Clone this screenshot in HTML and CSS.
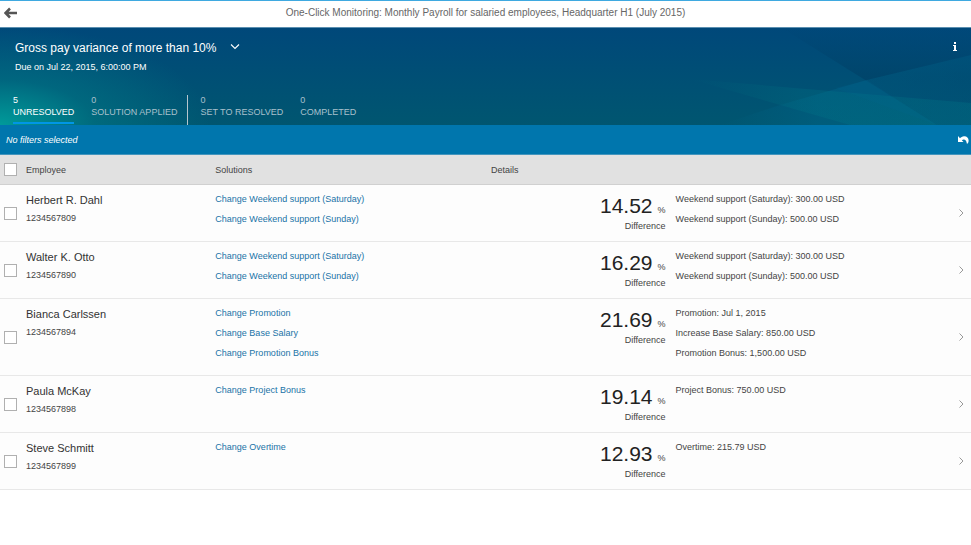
FILE: index.html
```html
<!DOCTYPE html>
<html lang="en">
<head>
  <meta charset="UTF-8" />
  <meta name="viewport" content="width=device-width, initial-scale=1.0" />
  <title>One-Click Monitoring</title>
  <link rel="stylesheet" href="styles.css">
</head>
<body>
  <header class="topbar">
    <button class="icon-btn back" aria-label="Back">
      <svg width="14" height="12" viewBox="0 0 14 12">
        <path d="M6 1.5 1.500 6l4.500 4.500M2 6H13" fill="none" stroke="#555" stroke-width="2.600"/>
      </svg>
    </button>
    <h1>One-Click Monitoring: Monthly Payroll for salaried employees, Headquarter H1 (July 2015)</h1>
  </header>

  <section class="hero">
    <svg class="hero-shapes" width="371" height="97" viewBox="0 0 371 97" aria-hidden="true">
      <defs>
        <linearGradient id="dark" x1="0" y1="0" x2="0" y2="1">
          <stop offset="0" stop-color="#003a66" stop-opacity="0"/>
          <stop offset="0.5" stop-color="#003a60" stop-opacity="0.45"/>
          <stop offset="1" stop-color="#003a60" stop-opacity="0.4"/>
        </linearGradient>
        <linearGradient id="beam" x1="0" y1="0" x2="1" y2="0">
          <stop offset="0" stop-color="#006a8c" stop-opacity="0"/>
          <stop offset="0.4" stop-color="#006a90" stop-opacity="0.35"/>
          <stop offset="1" stop-color="#006a90" stop-opacity="0.25"/>
        </linearGradient>
        <linearGradient id="teal" x1="0" y1="0" x2="1" y2="0">
          <stop offset="0" stop-color="#008080" stop-opacity="0"/>
          <stop offset="0.4" stop-color="#00808c" stop-opacity="0.2"/>
          <stop offset="1" stop-color="#00808c" stop-opacity="0.25"/>
        </linearGradient>
      </defs>
      <polygon points="182,0 371,0 371,97 337,97" fill="url(#dark)"/>
      <polygon points="371,27 267,52 180,77 120,97 371,97" fill="url(#beam)"/>
      <polygon points="90,51 371,75 371,97 250,97" fill="url(#teal)"/>
      <polygon points="267,52 235,60 337,97" fill="#00709a" opacity="0.1"/>
    </svg>
    <div class="hero-head">
      <h2>Gross pay variance of more than 10%</h2>
      <button class="icon-btn" aria-label="Select check">
        <svg width="10" height="8" viewBox="0 0 10 8">
          <path d="M1 .5 5 4.500 9 .5" fill="none" stroke="#fff" stroke-width="1.100"/>
        </svg>
      </button>
      <button class="icon-btn info" aria-label="Information">
        <svg width="4" height="12" viewBox="0 0 4 12">
          <path d="M1 0h2v2H1zM0 3h3v5h1v1H0V8h1V4H0z" fill="#fff"/>
        </svg>
      </button>
    </div>
    <p class="due">Due on Jul 22, 2015, 6:00:00 PM</p>
    <nav class="tabs">
      <a href="#" class="tab active"><span>5</span>UNRESOLVED</a>
      <a href="#" class="tab"><span>0</span>SOLUTION APPLIED</a>
      <a href="#" class="tab split"><span>0</span>SET TO RESOLVED</a>
      <a href="#" class="tab"><span>0</span>COMPLETED</a>
    </nav>
  </section>

  <div class="filterbar">
    <span>No filters selected</span>
    <button class="icon-btn" aria-label="Undo">
      <svg width="11" height="8" viewBox="0 0 11 8">
        <path d="M0 0v6h5.500L3.800 4.300C5.500 2.800 8.500 3.200 8.800 7.500h1C12 3.500 9.500 0 6 .3 4.300.4 3 1.200 2 2.300z" fill="#fff"/>
      </svg>
    </button>
  </div>

  <table class="list">
    <colgroup>
      <col class="c-check">
      <col class="c-employee">
      <col class="c-solutions">
      <col class="c-diff">
      <col>
      <col class="c-nav">
    </colgroup>
    <thead>
      <tr>
        <th><input type="checkbox" aria-label="Select all"></th>
        <th>Employee</th>
        <th>Solutions</th>
        <th colspan="3">Details</th>
      </tr>
    </thead>
    <tbody>
      <tr>
        <td class="check"><input type="checkbox" aria-label="Select Herbert R. Dahl"></td>
        <td class="employee"><strong>Herbert R. Dahl</strong>1234567809</td>
        <td class="lines"><a href="#">Change Weekend support (Saturday)</a><a href="#">Change Weekend support (Sunday)</a></td>
        <td class="diff"><div><b>14.52</b> %</div>Difference</td>
        <td class="lines"><span>Weekend support (Saturday): 300.00 USD</span><span>Weekend support (Sunday): 500.00 USD</span></td>
        <td class="check"><svg class="chev" width="5" height="8" viewBox="0 0 5 8"><path d="M.5.5 4 4 .5 7.500"/></svg></td>
      </tr>
      <tr>
        <td class="check"><input type="checkbox" aria-label="Select Walter K. Otto"></td>
        <td class="employee"><strong>Walter K. Otto</strong>1234567890</td>
        <td class="lines"><a href="#">Change Weekend support (Saturday)</a><a href="#">Change Weekend support (Sunday)</a></td>
        <td class="diff"><div><b>16.29</b> %</div>Difference</td>
        <td class="lines"><span>Weekend support (Saturday): 300.00 USD</span><span>Weekend support (Sunday): 500.00 USD</span></td>
        <td class="check"><svg class="chev" width="5" height="8" viewBox="0 0 5 8"><path d="M.5.5 4 4 .5 7.500"/></svg></td>
      </tr>
      <tr>
        <td class="check"><input type="checkbox" aria-label="Select Bianca Carlssen"></td>
        <td class="employee"><strong>Bianca Carlssen</strong>1234567894</td>
        <td class="lines"><a href="#">Change Promotion</a><a href="#">Change Base Salary</a><a href="#">Change Promotion Bonus</a></td>
        <td class="diff"><div><b>21.69</b> %</div>Difference</td>
        <td class="lines"><span>Promotion: Jul 1, 2015</span><span>Increase Base Salary: 850.00 USD</span><span>Promotion Bonus: 1,500.00 USD</span></td>
        <td class="check"><svg class="chev" width="5" height="8" viewBox="0 0 5 8"><path d="M.5.5 4 4 .5 7.500"/></svg></td>
      </tr>
      <tr>
        <td class="check"><input type="checkbox" aria-label="Select Paula McKay"></td>
        <td class="employee"><strong>Paula McKay</strong>1234567898</td>
        <td class="lines"><a href="#">Change Project Bonus</a></td>
        <td class="diff"><div><b>19.14</b> %</div>Difference</td>
        <td class="lines"><span>Project Bonus: 750.00 USD</span></td>
        <td class="check"><svg class="chev" width="5" height="8" viewBox="0 0 5 8"><path d="M.5.5 4 4 .5 7.500"/></svg></td>
      </tr>
      <tr>
        <td class="check"><input type="checkbox" aria-label="Select Steve Schmitt"></td>
        <td class="employee"><strong>Steve Schmitt</strong>1234567899</td>
        <td class="lines"><a href="#">Change Overtime</a></td>
        <td class="diff"><div><b>12.93</b> %</div>Difference</td>
        <td class="lines"><span>Overtime: 215.79 USD</span></td>
        <td class="check"><svg class="chev" width="5" height="8" viewBox="0 0 5 8"><path d="M.5.5 4 4 .5 7.500"/></svg></td>
      </tr>
    </tbody>
  </table>
</body>
</html>
```
FILE: styles.css
```css
* {
  box-sizing: border-box;
}

body {
  margin: 0;
  background: #fff;
  color: #444;
  font-family: Arial, "Liberation Sans", sans-serif;
  font-size: 9px;
}

h1, h2, p {
  margin: 0;
  font-weight: normal;
}

a {
  text-decoration: none;
}

.icon-btn {
  display: flex;
  padding: 0;
  border: none;
  background: none;
  cursor: pointer;
}

/* top bar */
.topbar {
  display: grid;
  grid-template-columns: 14px 1fr 14px;
  align-items: center;
  height: 28px;
  padding: 0 4px 2px;
  border-top: 1px solid #3fa9e0;
  border-bottom: 1px solid #5b8fb0;
}

.topbar h1 {
  font-size: 10px;
  line-height: 24px;
  text-align: center;
  color: #666;
}

/* header area */
.hero {
  position: relative;
  height: 97px;
  padding: 12px 14px 0 13px;
  background:
    radial-gradient(ellipse 210px 100px at 0 100%, #009a9a, rgba(0, 130, 140, 0.45) 45%, transparent),
    linear-gradient(#00487a, #005670);
  color: #fff;
}

.hero-shapes {
  position: absolute;
  right: 0;
  top: 0;
}

.hero-head {
  position: relative;
  display: flex;
  align-items: center;
  gap: 14px;
  padding-left: 2px;
}

.hero-head h2 {
  font-size: 12px;
  line-height: 16px;
}

.info {
  margin-left: auto;
}

.due {
  padding-left: 2px;
  line-height: 22px;
}

.tabs {
  display: flex;
  gap: 17px;
  margin-top: 17px;
}

.tab {
  height: 30px;
  color: #a9c0cc;
  line-height: 12px;
}

.tab span {
  display: block;
  line-height: 11px;
}

.tab.active {
  height: 29px;
  color: #fff;
  border-bottom: 2px solid #0096e6;
}

.tab.split {
  margin-left: -7px;
  padding-left: 12px;
  border-left: 1px solid #b5c6ce;
}

/* filter bar */
.filterbar {
  display: flex;
  align-items: center;
  justify-content: space-between;
  height: 30px;
  padding: 0 2px 0 6px;
  background: #0076ad;
  border-bottom: 1px solid #4395bd;
  color: #fff;
  font-style: italic;
}

/* employee list */
.list {
  width: 100%;
  table-layout: fixed;
  border-spacing: 0;
}

.c-check { width: 26px; }
.c-employee { width: 19.5%; }
.c-solutions { width: 28.4%; }
.c-diff { width: 19%; }
.c-nav { width: 14px; }

th {
  height: 30px;
  padding: 0;
  background: #e1e1e1;
  border-bottom: 1px solid #d0d0d0;
  font-weight: normal;
  text-align: left;
}

td {
  padding: 0;
  background: #fdfdfd;
  border-bottom: 1px solid #e8e8e8;
  vertical-align: top;
}

.check {
  vertical-align: middle;
}

input[type="checkbox"] {
  display: block;
  appearance: none;
  width: 13px;
  height: 13px;
  margin: 0 0 0 4px;
  background: #fff;
  border: 1px solid #b0b0b0;
}

.employee {
  padding-top: 7px;
  line-height: 20px;
}

.employee strong {
  display: block;
  font-size: 11px;
  font-weight: normal;
  line-height: 16px;
  color: #333;
}

.lines {
  padding: 4px 0 12px;
  line-height: 20px;
}

.lines a,
.lines span {
  display: block;
}

.lines a {
  color: #1a73a7;
}

.diff {
  height: 57px;
  padding: 9px 10px 0 0;
  line-height: 16px;
  text-align: right;
}

.diff div {
  display: flex;
  align-items: baseline;
  justify-content: flex-end;
  gap: 5px;
}

.diff b {
  font-size: 21px;
  font-weight: normal;
  line-height: 24px;
  color: #222;
}

.chev {
  display: block;
  margin-left: 2px;
  fill: none;
  stroke: #999;
}
```
